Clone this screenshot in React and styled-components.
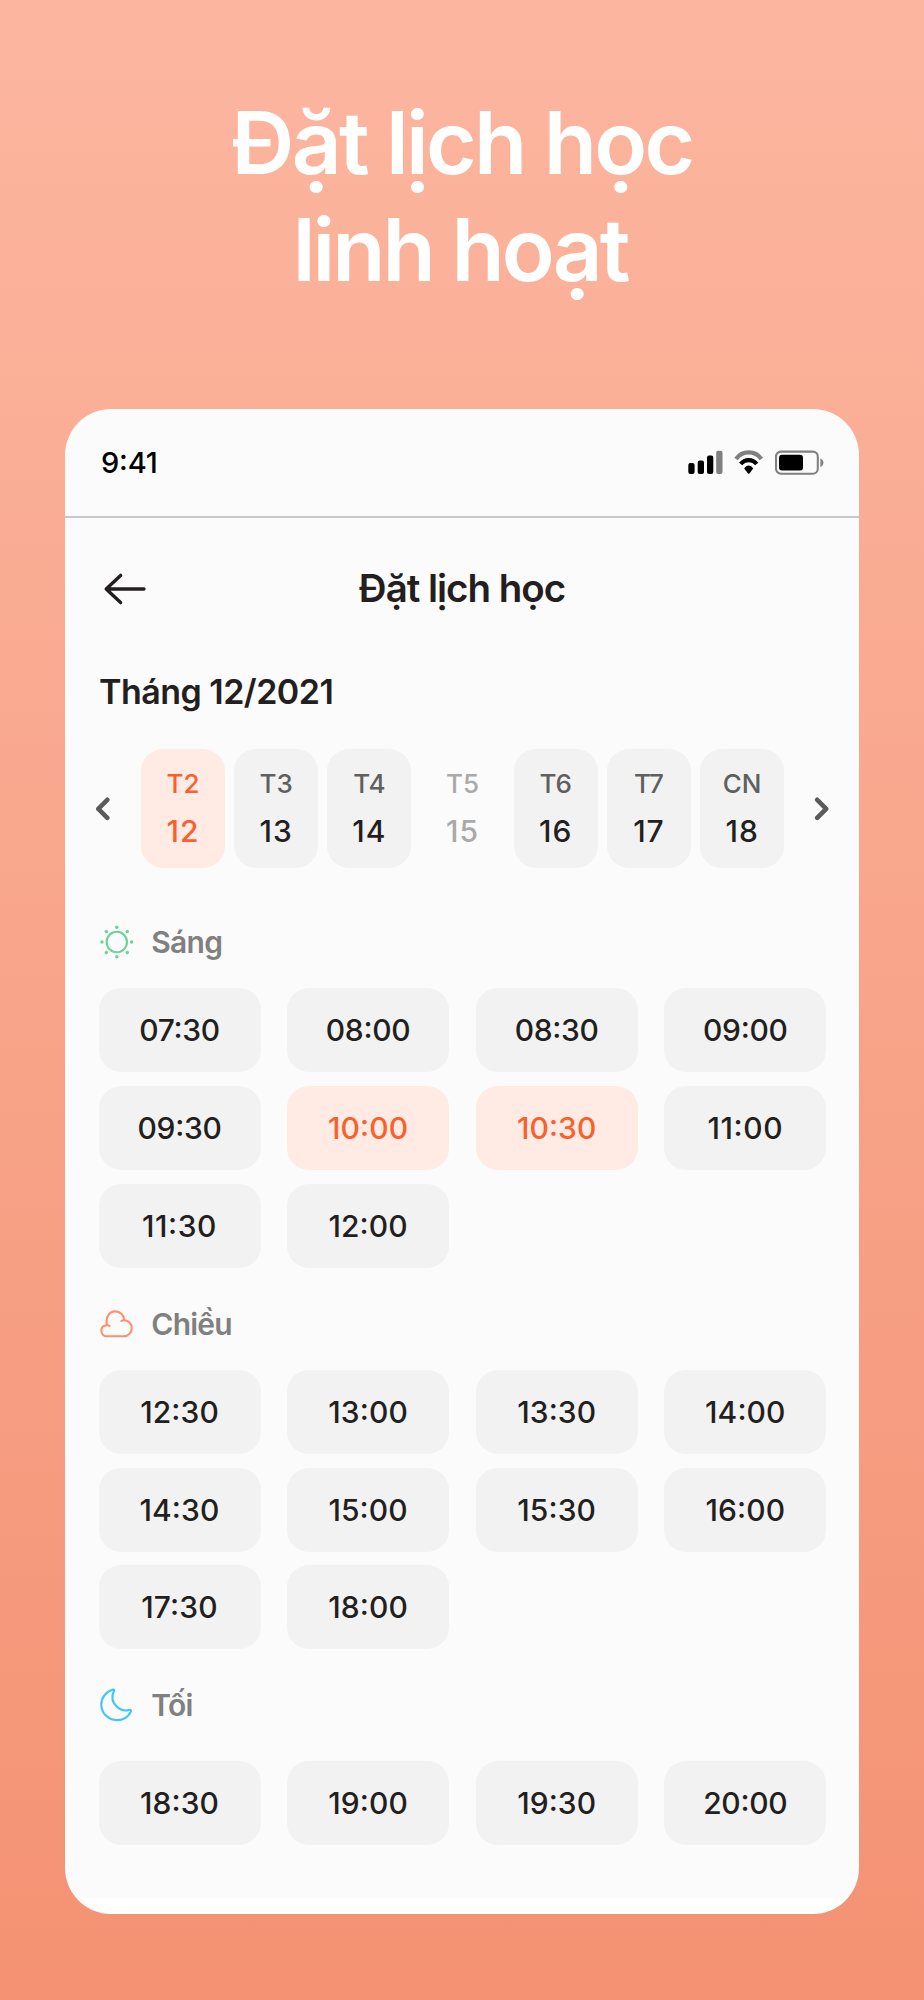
import React from "react";
import styled, { createGlobalStyle } from "styled-components";

const colors = {
  ink: "#231f20",
  muted: "#808080",
  orange: "#f9602b",
  peach: "#ffebe4",
  chip: "#f2f2f2",
  screen: "#fbfbfb"
};

const GlobalStyle = createGlobalStyle`
  *, *::before, *::after {
    box-sizing: border-box;
  }

  body {
    margin: 0;
    font-family: "Inter", sans-serif;
    font-feature-settings: "calt" 1;
    -webkit-font-smoothing: antialiased;
  }
`;

const Page = styled.main`
  display: flex;
  flex-direction: column;
  align-items: center;
  width: 924px;
  height: 2000px;
  padding-top: 90px;
  background: linear-gradient(180deg, #fcb6a0 0%, #f49273 100%);
`;

const Hero = styled.h1`
  margin: 0 0 106px;
  font-size: 87px;
  font-weight: 600;
  line-height: 106.5px;
  color: #fff;
  text-align: center;
`;

const HeroLine = styled.span`
  display: block;
  padding-right: ${({ inset }) => inset || 0}px;
  letter-spacing: ${({ tracking }) => tracking}px;
`;

const Phone = styled.section`
  display: flex;
  flex-direction: column;
  width: 794px;
  height: 1505px;
  overflow: hidden;
  border-radius: 46px;
  background: linear-gradient(${colors.screen} 1489px, #fff 1489px);
`;

const StatusBar = styled.div`
  display: flex;
  align-items: center;
  justify-content: space-between;
  height: 109px;
  padding: 0 35px 0 36px;
  border-bottom: 2px solid #c7c6ca;
`;

const Clock = styled.time`
  font-size: 29px;
  font-weight: 450;
  letter-spacing: -0.2px;
  color: #000;
`;

const StatusIcons = styled.div`
  display: flex;
  align-items: center;
  gap: 11px;
`;

const Header = styled.header`
  display: grid;
  grid-template-columns: 48px 1fr 48px;
  align-items: center;
  height: 141px;
  padding: 0 37px;
`;

const IconButton = styled.button`
  display: flex;
  padding: 0;
  border: 0;
  background: none;
`;

const Title = styled.h2`
  margin: 0 0 2px;
  font-size: 38.5px;
  font-weight: 600;
  letter-spacing: -1.02px;
  text-align: center;
  color: ${colors.ink};
`;

const Month = styled.h3`
  margin: 13px 0 37px 34px;
  font-size: 34px;
  font-weight: 600;
  line-height: 40px;
  letter-spacing: -0.52px;
  color: ${colors.ink};
`;

const Week = styled.div`
  display: flex;
  align-items: center;
  gap: 30px;
  padding-left: 31px;
`;

const Days = styled.div`
  display: grid;
  grid-template-columns: repeat(7, 84px);
  gap: 9.2px;
`;

const dayTone = {
  active: { bg: colors.peach, name: colors.orange, date: colors.orange },
  normal: { bg: colors.chip, name: "#5f5f5f", date: colors.ink },
  disabled: { bg: "transparent", name: "#a9a9a9", date: "#a9a9a9" }
};

const Day = styled.div`
  display: flex;
  flex-direction: column;
  align-items: center;
  height: 119px;
  padding-top: 17px;
  border-radius: 22px;
  background: ${({ tone }) => dayTone[tone].bg};
`;

const DayName = styled.span`
  font-size: 26px;
  font-weight: 450;
  line-height: 35px;
  color: ${({ tone }) => dayTone[tone].name};
`;

const DayDate = styled.span`
  margin-top: 10px;
  font-size: 30px;
  font-weight: 500;
  line-height: 41px;
  letter-spacing: 1px;
  color: ${({ tone }) => dayTone[tone].date};
`;

const Section = styled.section`
  padding: 0 33.5px;
  margin-top: ${({ gap }) => gap}px;
`;

const SectionTitle = styled.h4`
  display: flex;
  align-items: center;
  height: 40px;
  margin: 0 0 ${({ gap }) => gap}px;
  font-size: 30px;
  font-weight: 600;
  letter-spacing: -0.75px;
  color: ${colors.muted};

  svg {
    flex: none;
    margin: 0 17.8px 0 1px;
  }
`;

const Slots = styled.div`
  display: grid;
  grid-template-columns: repeat(4, 162px);
  grid-auto-rows: 84px;
  gap: 13.7px 26.6px;
`;

const Slot = styled.div`
  display: flex;
  align-items: center;
  justify-content: center;
  border-radius: 22px;
  font-size: 30px;
  font-weight: 500;
  letter-spacing: ${({ tracking }) => tracking}px;
  color: ${({ active }) => (active ? colors.orange : colors.ink)};
  background: ${({ active }) => (active ? colors.peach : colors.chip)};
`;

function SignalIcon() {
  return (
    <svg width="35" height="25" viewBox="0 0 35 25">
      <rect x="0.3" y="13" width="6.3" height="11" rx="2" />
      <rect x="9.7" y="10.4" width="6.3" height="13.6" rx="2" />
      <rect x="19" y="5.4" width="6.3" height="18.6" rx="2" />
      <rect x="28.2" y="0.7" width="6.3" height="23.3" rx="2" fill="#808080" />
    </svg>
  );
}

function WifiIcon() {
  return (
    <svg width="30" height="25" viewBox="0 0 30 25" fill="none">
      <path d="M2 9A15.6 15.6 0 0 1 27.4 9" stroke="#808080" strokeWidth="4.2" />
      <path d="M6.7 14A10.2 10.2 0 0 1 22.7 14" stroke="#000" strokeWidth="4.2" />
      <path
        d="M10.2 18.6C12.6 14.6 16.8 14.6 19.2 18.6L15.6 23.3Q14.7 24.4 13.8 23.3Z"
        fill="#000"
      />
    </svg>
  );
}

function BatteryIcon() {
  return (
    <svg width="49" height="25" viewBox="0 0 49 25">
      <rect
        x="1"
        y="1.6"
        width="41.8"
        height="22.2"
        rx="5"
        fill="none"
        stroke="#808080"
        strokeWidth="2.1"
      />
      <rect x="4" y="4.8" width="24" height="15.8" rx="3" />
      <path d="M45.4 8.4C49.4 9.8 49.4 15.5 45.4 16.9Z" fill="#808080" />
    </svg>
  );
}

function BackIcon() {
  return (
    <svg
      width="48"
      height="36"
      viewBox="0 0 48 36"
      fill="none"
      stroke={colors.ink}
      strokeWidth="3.4"
      strokeLinecap="round"
      strokeLinejoin="round"
    >
      <path d="M42 18H4.2M18.6 4.4 4.2 18l14.4 13.6" />
    </svg>
  );
}

function Chevron({ next }) {
  return (
    <svg
      width="15"
      height="26"
      viewBox="0 0 15 26"
      fill="none"
      stroke="#5b5b5b"
      strokeWidth="4.6"
      strokeLinecap="round"
      strokeLinejoin="round"
    >
      <path d={next ? "M3.2 3.8l9 9-9 9" : "M11.3 3.8l-9 9 9 9"} />
    </svg>
  );
}

function SunIcon() {
  const rays = [0, 45, 90, 135, 180, 225, 270, 315];
  return (
    <svg width="34" height="34" viewBox="0 0 34 34" fill="#6cd398">
      <circle cx="16.8" cy="17" r="10.2" fill="none" stroke="#6cd398" strokeWidth="2.1" />
      {rays.map(angle => (
        <circle
          key={angle}
          cx="16.8"
          cy="2.2"
          r="1.7"
          transform={`rotate(${angle} 16.8 17)`}
        />
      ))}
    </svg>
  );
}

function CloudIcon() {
  return (
    <svg
      width="34"
      height="28"
      viewBox="0 0 34 28"
      fill="none"
      stroke="#ff8f6b"
      strokeWidth="2.1"
      strokeLinecap="round"
    >
      <path d="M9.6 15.8C8.7 15.3 7.7 15.2 6.8 15.3C3.5 15.5 1.4 17.8 1.4 20.8C1.4 23.9 3.8 26.3 6.9 26.3H24C28.3 26.3 31.7 22.6 31.7 18.2C31.7 13.5 28.3 10.2 24.4 10.2C23.2 10.2 22.2 10.4 21.4 10.9" />
      <path d="M6.8 15.1C5.4 7 9.5 1.4 15.1 1.4C20 1.4 23.9 5 24.4 10.1" />
    </svg>
  );
}

function MoonIcon() {
  return (
    <svg
      width="34"
      height="34"
      viewBox="0 0 34 34"
      fill="none"
      stroke="#3fc4fb"
      strokeWidth="2.1"
      strokeLinejoin="round"
    >
      <path d="M13.2 1.5C6 3.4 1.3 9.4 1.3 16.4C1.3 25.2 8.2 32.1 16.9 32.1C23 32.1 28.1 28.9 30.7 23.9C31.5 22.3 30.7 21.5 29.1 21.9C25.5 22.9 20.9 22.6 17 18.8C11.9 14 10.9 8.9 14 2.9C14.6 1.7 14 1.3 13.2 1.5Z" />
    </svg>
  );
}

const days = [
  { name: "T2", date: 12, tone: "active" },
  { name: "T3", date: 13, tone: "normal" },
  { name: "T4", date: 14, tone: "normal" },
  { name: "T5", date: 15, tone: "disabled" },
  { name: "T6", date: 16, tone: "normal" },
  { name: "T7", date: 17, tone: "normal" },
  { name: "CN", date: 18, tone: "normal" }
];

const sections = [
  {
    title: "Sáng",
    icon: <SunIcon />,
    gap: 53.5,
    titleGap: 26.8,
    times: [
      "07:30",
      "08:00",
      "08:30",
      "09:00",
      "09:30",
      "10:00",
      "10:30",
      "11:00",
      "11:30",
      "12:00"
    ]
  },
  {
    title: "Chiều",
    icon: <CloudIcon />,
    gap: 36.2,
    titleGap: 26.2,
    times: [
      "12:30",
      "13:00",
      "13:30",
      "14:00",
      "14:30",
      "15:00",
      "15:30",
      "16:00",
      "17:30",
      "18:00"
    ]
  },
  {
    title: "Tối",
    icon: <MoonIcon />,
    gap: 35.4,
    titleGap: 36.4,
    times: ["18:30", "19:00", "19:30", "20:00"]
  }
];

const selected = ["10:00", "10:30"];

// the "1" is narrow, so times that start with it are set a little looser
function trackingFor(time) {
  if (time.startsWith("11")) return 0.6;
  return time.startsWith("1") ? 0.1 : -0.3;
}

export default function App() {
  return (
    <>
      <GlobalStyle />
      <Page>
        <Hero>
          <HeroLine tracking={-2.75}>Đặt lịch học</HeroLine>
          <HeroLine tracking={-3} inset={4}>
            linh hoạt
          </HeroLine>
        </Hero>
        <Phone>
          <StatusBar>
            <Clock>9:41</Clock>
            <StatusIcons>
              <SignalIcon />
              <WifiIcon />
              <BatteryIcon />
            </StatusIcons>
          </StatusBar>
          <Header>
            <IconButton aria-label="Quay lại">
              <BackIcon />
            </IconButton>
            <Title>Đặt lịch học</Title>
          </Header>
          <Month>Tháng 12/2021</Month>
          <Week>
            <IconButton aria-label="Tuần trước">
              <Chevron />
            </IconButton>
            <Days>
              {days.map(({ name, date, tone }) => (
                <Day key={name} tone={tone}>
                  <DayName tone={tone}>{name}</DayName>
                  <DayDate tone={tone}>{date}</DayDate>
                </Day>
              ))}
            </Days>
            <IconButton aria-label="Tuần sau">
              <Chevron next />
            </IconButton>
          </Week>
          {sections.map(({ title, icon, gap, titleGap, times }) => (
            <Section key={title} gap={gap}>
              <SectionTitle gap={titleGap}>
                {icon}
                {title}
              </SectionTitle>
              <Slots>
                {times.map(time => (
                  <Slot
                    key={time}
                    active={selected.includes(time)}
                    tracking={trackingFor(time)}
                  >
                    {time}
                  </Slot>
                ))}
              </Slots>
            </Section>
          ))}
        </Phone>
      </Page>
    </>
  );
}
